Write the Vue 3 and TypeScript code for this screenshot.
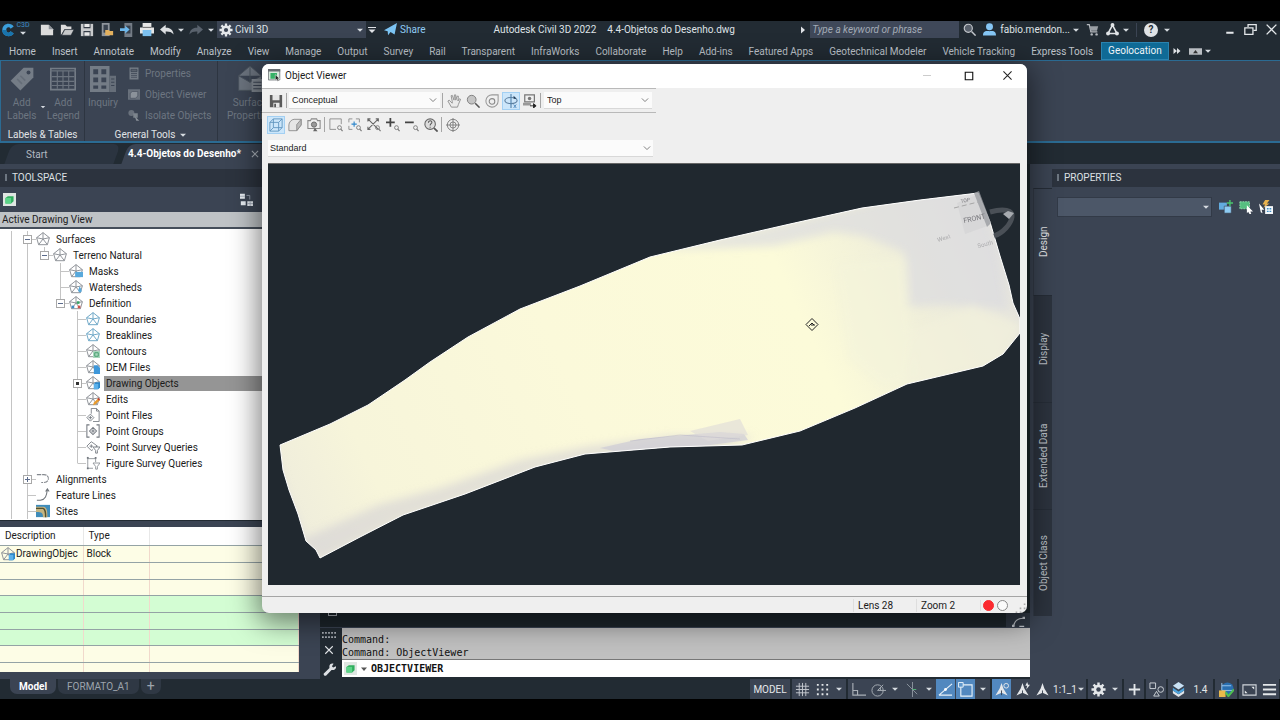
<script setup lang="ts">
import { ref } from 'vue'

const tri = '<path d="M2 5.500h12L8 11.500z" fill="#d5dae0"/>'
const gear = '<g stroke="#e4e7ea" stroke-width="2.600"><path d="M8 .5v15M.5 8h15M2.700 2.700l10.600 10.600M13.300 2.700L2.700 13.300"/></g><circle cx="8" cy="8" r="5.200" fill="#e4e7ea"/><circle cx="8" cy="8" r="2.400" fill="#3b4453"/>'
const house = '<path d="M.7 6.500L8 .7l7.300 5.800L13 14.500H3zM8 .7V8L.7 6.500M8 8l-5 6.500M8 8l5 6.500M8 8l7.300-1.500" fill="none" stroke="#8d9197" stroke-width="1.100"/>'
const houseBlue = house.replace('#8d9197', '#6ba5c6')
const glass = '<circle cx="12" cy="11" r="2.200" fill="none" stroke="#777"/><path d="M13.500 12.800l2 2.200" stroke="#777" stroke-width="1.300"/>'
const navA = '<path d="M8 1l2 6 4.500 7.500L8 11.500 1.500 14.500 6 7z" fill="#e4e7ea"/><path d="M8 9v5" stroke="#3b4453"/>'

const icons: Record<string, string> = {
  tri, gear, navA,
  logo: '<path d="M14.500 4C11.500-1 1.500 0 1.500 8s10 9 13 4l-3.500-2.500C9.500 12 6 11.500 6 8s3.500-4 5-1.500z" fill="#3b9edb"/><path d="M1.500 8c0 8 10 9 13 4l-3.500-2.500C9.500 12 6 11.500 6 8z" fill="#1974ad"/>',
  newDoc: '<path d="M1 2h9l5 5v7H1z" fill="#dcdcdc"/><path d="M10 2v5h5z" fill="#8d9299"/>',
  open: '<path d="M1 14V2h5l2 2h5v3H5z" fill="#dcdcdc"/><path d="M5.500 7.500H16L12.500 14H2z" fill="#c6c8ca" stroke="#222b33" stroke-width=".6"/>',
  save: '<path d="M1 1h14v14H1z" fill="#c8cacc"/><path d="M4 1h8v5H4zM4 9h8v6H4z" fill="#343c47"/><path d="M5 10.500h6v4H5zM5 1h6v3.500H5z" fill="#e8e8e8"/>',
  saveAs: '<path d="M2 0h9v15H2z" fill="#8f959c"/><path d="M4 2h5v9H4z" fill="#39424e"/><path d="M6 14V8h4l1 1h4v5z" fill="#e3b15e"/>',
  cloudIn: '<path d="M5 0h9v16H5z" fill="#747c86"/><path d="M7 3h5v9H7z" fill="#39424e"/><path d="M0 6h6V3l5 4.500L6 12V9H0z" fill="#6db8ec"/>',
  print: '<path d="M3 0h10v5H3zM0 5h16v7H0z" fill="#e6e6e6"/><path d="M3 8h10v7H3z" fill="#7cc0ef"/><path d="M3 5h10" stroke="#555"/>',
  undo: '<path d="M0 7.500L6.500 2v3.500C11 5 15 7.500 15.500 13 13 10 10 9.500 6.500 9.700V13z" fill="#dcdfe2"/>',
  redo: '<path d="M16 7.500L9.500 2v3.500C5 5 1 7.500.5 13 3 10 6 9.500 9.500 9.700V13z" fill="#59626d"/>',
  barTri: '<path d="M0 3h16" stroke="#dfe2e6" stroke-width="2"/><path d="M1 7h14l-7 7z" fill="#dfe2e6"/>',
  plane: '<path d="M0 9L16 0l-3 14-5-3-3 4-.5-5zM4.500 10L13 3.500 7.500 11z" fill="#7cc4f3"/>',
  right: '<path d="M4 1l8 7-8 7z" fill="#dfe2e6"/>',
  search: '<circle cx="6.500" cy="6.500" r="5" fill="#59616c" stroke="#c4c8cd" stroke-width="1.400"/><path d="M10.500 10.500l5 5" stroke="#c4c8cd" stroke-width="1.800"/>',
  user: '<circle cx="8" cy="4.500" r="4.300" fill="#86c6f4"/><path d="M0 15.500c0-6 4-5.500 8-5.500s8-.5 8 5.500z" fill="#86c6f4"/>',
  cart: '<path d="M1 2h3l2 9h8" fill="none" stroke="#b6babf" stroke-width="1.500"/><path d="M4.500 4H15l-1.500 5.500h-8z" fill="#9a9fa5"/><circle cx="7" cy="14" r="1.500" fill="#b6babf"/><circle cx="13" cy="14" r="1.500" fill="#b6babf"/>',
  delta: '<path d="M8 2.500L13.500 13h-11z" fill="none" stroke="#e1e4e7" stroke-width="1.900"/><circle cx="8" cy="2.500" r="2.400" fill="#e1e4e7"/><circle cx="2.500" cy="13" r="2.400" fill="#e1e4e7"/><circle cx="13.500" cy="13" r="2.400" fill="#e1e4e7"/>',
  min: '<path d="M4 12h9" stroke="#e4e7ea" stroke-width="2.500"/>',
  restore: '<path d="M5 5V2h10v7h-3M1 6h10v8H1z" fill="none" stroke="#e4e7ea" stroke-width="1.600"/>',
  close: '<path d="M2 2l12 12M14 2L2 14" stroke="#e4e7ea" stroke-width="1.700"/>',
  closeDim: '<path d="M3 3l10 10M13 3L3 13" stroke="#a9b0b8" stroke-width="1.700"/>',
  ff: '<path d="M1 2l7 6-7 6zM8 2l7 6-7 6z" fill="#dfe2e6"/>',
  tag: '<path d="M1 9L9 1l6 0v6L7 15z" fill="#747c86"/><circle cx="12" cy="4" r="1.200" fill="#3b4453"/><path d="M5 8l3 3M7 6l3 3" stroke="#656d78"/>',
  grid: '<path d="M.5 1.500h15v13H.5z" fill="none" stroke="#747c86"/><path d="M0 3h16M1 6.500h14M1 9.500h14M1 12h14M4.500 3v11M8 3v11M11.500 3v11" stroke="#6b737e" stroke-width=".7"/>',
  calc: '<path d="M0 0h12v16H0z" fill="#747c86"/><path d="M2 2h3v3H2zM7 2h3v3H7zM2 7h3v3H2zM7 7h3v3H7zM2 12h3v2H2zM7 12h3v2H7z" fill="#3b4453"/><path d="M12 6h4v10h-4z" fill="#666e79"/><path d="M13 8h2M13 10h2M13 12h2" stroke="#3b4453" stroke-width=".7"/>',
  props: '<path d="M2 0h12v16H2z" fill="#747c86"/><path d="M4 2.500h8v3H4zM4 8h8M4 10.500h8M4 13h8" stroke="#3b4453" fill="#59616c"/>',
  cube: '<path d="M0 1h16v14H0z" fill="#69717c"/><path d="M3 6l3-2h7v6l-3 3H3z" fill="#8b929a" stroke="#3b4453" stroke-width=".7"/>',
  isolate: '<circle cx="4.500" cy="4.500" r="4" fill="#69717c"/><path d="M7 5h6v6H7z" fill="#7c848d"/><path d="M9 9l6 6h-4z" fill="#8b929a"/>',
  surfBig: '<path d="M1 6l7-6 7 6v9H1zM1 6l7 4 7-4M8 0v10" fill="#6c747f" stroke="#49525e" stroke-width=".6"/><path d="M9 8h7v8H9z" fill="#808891"/><path d="M10 10h5M10 12h5M10 14h5" stroke="#3b4453" stroke-width=".6"/>',
  green: '<path d="M0 0h16v16H0z" fill="#dfe6e2"/><path d="M3 6l3-2h7v6l-3 3H3z" fill="#2fae5d"/><path d="M3 6h7v7H3z" fill="#5bd488"/>',
  greenWin: '<path d="M.5.5h14v13H.5z" fill="#d8e8dd" stroke="#686d72"/><path d="M0 0h15v3H0z" fill="#686d72"/><path d="M3 5h8v7H3z" fill="#36b167"/><path d="M9 7l5.500 5H12l1.500 2.500-1.500.5-1.500-2.500L9 14z" fill="#222" stroke="#fff" stroke-width=".6"/>',
  orgchart: '<path d="M0 1h6v6H0zM9 10h7v6H9zM1 10h6v5H1z" fill="#e8edf3"/><path d="M8 3h4v5M0 4h6M12.500 10v6M9 13h7" stroke="#9aa4b1" fill="none"/>',
  house,
  houseBlue,
  masks: house + '<path d="M7 9h9v6H7z" fill="#58a9dc"/>',
  water: house + '<path d="M12 7c6 8-1 9-1.500 5z" fill="#58a9dc"/>',
  def: house + '<path d="M9 6h3v3H9z" fill="#38a567"/><path d="M3 11h3v3H3z" fill="#3d8dc4"/><path d="M10 11h3v3h-3z" fill="#cf5148"/>',
  contours: house + '<path d="M8 8h8v8H8z" fill="#a9d6bd"/><path d="M10 10h4v4h-4z" fill="none" stroke="#3b9868"/>',
  dem: house + '<path d="M9 6h4l3 3v7H9z" fill="#3e97da"/>',
  objs: house + '<path d="M9 9l2-2h5v6l-2 2H9z" fill="#2b86c9"/><path d="M9 9h5v6H9z" fill="#5bb0ea"/>',
  edits: house + '<path d="M8 15l1-3 5-5 2 2-5 5z" fill="#e89b2e"/><path d="M13 8l1-1.500 2 2L15 10z" fill="#c53e32"/>',
  pfile: '<path d="M6 .5h6l3 3v12H8M6 .5v6M12 .5v3h3M1 11l4-4 4 4-4 4zM3 11h4M5 9v4" fill="none" stroke="#747980"/>',
  pgroup: '<path d="M4 1H1v14h3M12 1h3v14h-3M4 8l4-4 4 4-4 4zM6 8h4M8 6v4" fill="none" stroke="#747980" stroke-width="1.200"/>',
  pquery: '<path d="M1 7l5-5 3 2 4 3-2 1M1 7l5 5 2-1M6 5v4M4 7h4M8 8h8l-3 4v3h-2v-3z" fill="none" stroke="#747980"/>',
  fquery: '<path d="M2 1v13h6M2 3h9M11 2v5M8 8h8l-3 4v3h-2v-3z" fill="none" stroke="#8b9096"/><path d="M1 1h2v2H1zM10 1h2v2h-2zM1 13h2v2H1z" fill="#747980"/>',
  align: '<path d="M1 3h8c7 0 7 9 0 9H6" fill="none" stroke="#85898f" stroke-width="1.200" stroke-dasharray="5 1"/>',
  feature: '<path d="M1 14h4c6-1 7-5 8-12M11 4l2-3 2 3" fill="none" stroke="#6d7379" stroke-width="1.200"/>',
  sites: '<path d="M0 1h16v14H0z" fill="#3f8cba"/><path d="M0 3h9c4 1 4 6 4 12H8c0-5-1-6-8-6z" fill="#c5b582"/><path d="M0 5h8c3 1 3 5 3 10" fill="none" stroke="#54502f" stroke-width="1.500"/>',
  addSel: '<path d="M0 3h9v8H0z" fill="#62acdf"/><path d="M6 7h8v8H6z" fill="#8dcbf2" stroke="#3b4453" stroke-width=".7"/><path d="M12.500 0v7M9 3.500h7" stroke="#4ac46d" stroke-width="1.600"/>',
  pick: '<path d="M1 2h11v8H1z" fill="#56bf80" stroke="#93e2b0" stroke-dasharray="2 1"/><path d="M9 6l7 7h-3l1 3h-2l-1.500-2.500L9 15z" fill="#fff"/>',
  quick: '<path d="M7 0h5l-3 4h3L5 9l2-4H4z" fill="#e9b24e"/><path d="M0 4l6 7H3l1 4-2-1z" fill="#fff"/><path d="M7 7h9v9H7z" fill="#f4f7fa"/><path d="M9 10h2M12 10h2M9 13h2M12 13h2" stroke="#3d8dc4" stroke-width="1.500"/>',
  hand: '<path d="M5 15h7l1-3 2.500-6-1.500-.5L12.500 8 13 2.500l-1.500 0L10 7V1L8.500 1 8 7 6 1.500l-1.300.5L6 8.500v2L2.500 7 1 8z" fill="#ebebeb" stroke="#8a8a8a"/>',
  mag: '<circle cx="6.500" cy="6.500" r="5" fill="#c5c5c5" stroke="#777"/><path d="M10.500 10.500l5 5" stroke="#555" stroke-width="1.800"/>',
  orbit: '<path d="M8.500 1H15v7a7 7 0 1 1-6.500-7z" fill="none" stroke="#999" stroke-width="1.200"/><circle cx="8" cy="8.500" r="3.200" fill="none" stroke="#888" stroke-width="1.200"/>',
  corbit: '<ellipse cx="8" cy="7.500" rx="7" ry="3.500" fill="none" stroke="#5d7f9f" stroke-width="1.300"/><path d="M8 0v16" stroke="#5484ad" stroke-width="1.300"/><path d="M11 2l3.500 3.500H11z" fill="#1f3a55"/><path d="M11 12l3 4M14 12l-3 4" stroke="#4c86b8"/>',
  camGo: '<path d="M2 1h11v8H2z" fill="none" stroke="#777" stroke-width="1.400"/><circle cx="7.500" cy="5" r="2" fill="#777"/><path d="M0 10h9v3H0z" fill="#999"/><path d="M8 13.500h6M12 11l3 2.500-3 2.500z" fill="#222" stroke="#222"/>',
  wire: '<path d="M1 5l4-4h10v10l-4 4H1zM1 5h10v10M11 5l4-4M5 1v10h10M5 11l-4 4" fill="none" stroke="#5e94be"/>',
  solid: '<path d="M1 8c0-3 3-6.500 6-6.500h8V8l-5 6.500H1z" fill="#e6e6e6" stroke="#8a8a8a"/><path d="M10 7.500l5-6V8l-5 6.500z" fill="#bdbdbd" stroke="#8a8a8a"/>',
  cam: '<path d="M1 3h3l1-2h6l1 2h3v9H1z" fill="none" stroke="#8a8a8a" stroke-width="1.200"/><circle cx="8" cy="7.500" r="3" fill="#999" stroke="#666"/><path d="M9 11l3 4H7z" fill="#666"/>',
  zwin: '<path d="M8 13H1V1h13v6" fill="none" stroke="#888"/>' + glass,
  zext: '<path d="M1 5V1h4M9 1h4v4M1 9v4h4" fill="none" stroke="#888"/><path d="M7 4v6M4 7h6" stroke="#2f87cc" stroke-width="1.300"/>' + glass,
  zall: '<path d="M1 1l12 12M13 1L1 13M1 4V1h3M10 1h3v3M1 10v3h3" fill="none" stroke="#666" stroke-width="1.200"/>' + glass,
  zin: '<path d="M5 0v10M0 5h10" stroke="#444" stroke-width="2"/>' + glass,
  zout: '<path d="M0 5h10" stroke="#444" stroke-width="2"/>' + glass,
  zq: '<circle cx="7" cy="7" r="6" fill="#ddd" stroke="#666" stroke-width="1.200"/><path d="M5 5.500c0-3 4-3 4-.5 0 1.500-2 1.500-2 3.500M7 10v1.200" stroke="#555" fill="none" stroke-width="1.200"/><path d="M11.500 11.500l4 4" stroke="#555" stroke-width="2"/>',
  target: '<circle cx="8" cy="8" r="6.500" fill="none" stroke="#777"/><circle cx="8" cy="8" r="3.500" fill="none" stroke="#777"/><path d="M8 0v16M0 8h16" stroke="#777"/>',
  floppy: '<path d="M1 1h14v14H1z" fill="#5a5a5a"/><path d="M4 1h8v6H4zM5 10h7v5H5z" fill="#e6e6e6"/><path d="M6 11h2v4H6z" fill="#555"/>',
  max: '<path d="M2 2h12v12H2z" fill="none" stroke="#111" stroke-width="1.800"/>',
  xdark: '<path d="M3 3l10 10M13 3L3 13" stroke="#222" stroke-width="1.300"/>',
  chev: '<path d="M3 5.500l5 5 5-5" fill="none" stroke="#777" stroke-width="1.500"/>',
  wrench: '<path d="M1 13l7-7c-1-4 2-6 5-5l-2 3 1.500 1.500L16 4c.5 3-2 5.500-5.500 4.500L4 15.500c-1.500 1-4-1-3-2.500z" fill="#dde0e4"/>',
  dots: '<path d="M0 2h16M0 7h16" stroke="#aeb4bb" stroke-width="2" stroke-dasharray="2 1.500"/>',
  sgrid: '<path d="M4.500 1v14M11.500 1v14M1 4.500h14M1 11.500h14M8 1v14M1 8h14" stroke="#c4c9cf"/>',
  sdots: '<path d="M2 3h13M2 8h13M2 13h13" stroke="#e4e7ea" stroke-width="2" stroke-dasharray="2 3"/>',
  ortho: '<path d="M2 1v13h14M2 9h5v5" fill="none" stroke="#aab0b8" stroke-width="1.200"/>',
  polar: '<circle cx="7" cy="9" r="6" fill="none" stroke="#aab0b8"/><path d="M7 9h9M7 9l6-6M10 9V6" stroke="#aab0b8" fill="none"/>',
  iso: '<path d="M2 2l11 11M8 0v16" stroke="#8d959f"/><path d="M8 8h4" stroke="#55b87b"/>',
  otrack: '<path d="M1 14L15 2M1 14h14" stroke="#e9f2fa" fill="none" stroke-width="1.200"/><circle cx="8" cy="8" r="1.500" fill="#fff"/>',
  osnap: '<path d="M3 3h12v12H3z" fill="none" stroke="#e9f2fa" stroke-width="1.200"/><path d="M.5.5h5v5h-5z" fill="#5f97cc" stroke="#e9f2fa"/>',
  annoVis: navA + '<circle cx="13" cy="4" r="2.500" fill="none" stroke="#e4e7ea"/>',
  annoAdd: navA + '<path d="M13 0l-2 4h2l-1 4 4-5h-2z" fill="#e4e7ea"/>',
  plus: '<path d="M8 2v12M2 8h12" stroke="#e4e7ea" stroke-width="2"/>',
  shapes: '<path d="M1 1h6v6H1zM5 15l3-5 3 5z" fill="none" stroke="#cfd4da"/><circle cx="12.500" cy="8" r="3" fill="none" stroke="#cfd4da"/>',
  layers: '<path d="M2 9l6 4 6-4v3l-6 4-6-4z" fill="#dfe4ea"/><path d="M2 6l6 4 6-4v3l-6 4-6-4z" fill="#4da3dd"/><path d="M2 4l6-4 6 4-6 4z" fill="#c9e2f5"/>',
  check: '<circle cx="9" cy="7" r="6.500" fill="#2a6fb0"/><path d="M3 1v8h12M3 4h10" stroke="#9cc8ef" fill="none"/><path d="M0 9h7v7H0z" fill="#e9b94c"/><path d="M7 11l3 4 6-7" fill="none" stroke="#4fc04f" stroke-width="2.200"/>',
  full: '<path d="M1 3h14v11H1z" fill="none" stroke="#cfd4da" stroke-width="1.200"/><path d="M13 5h-3l3 3zM3 12h3l-3-3z" fill="#e4e7ea"/>',
  menu: '<path d="M1 3h14M1 8h14M1 13h14" stroke="#e4e7ea" stroke-width="2"/>',
  ribMin: '<path d="M0 4h16v8H0z" fill="#b9bdc2"/><path d="M5 10h6L8 6z" fill="#333"/>',
  arc: '<path d="M2 14C3 7 8 4 14 4M9 14h6" stroke="#c4c9cf" fill="none" stroke-width="1.500"/><path d="M13 2h3v3h-3zM0 12h3v3H0z" fill="#c4c9cf"/>',
}

const menus = ['Home', 'Insert', 'Annotate', 'Modify', 'Analyze', 'View', 'Manage', 'Output', 'Survey', 'Rail', 'Transparent', 'InfraWorks', 'Collaborate', 'Help', 'Add-ins', 'Featured Apps', 'Geotechnical Modeler', 'Vehicle Tracking', 'Express Tools', 'Geolocation']
const activeMenu = ref('Geolocation')

interface Node { d: number; label: string; icon: string; exp?: '-' | '+' | '*'; last?: boolean }
const nodes: Node[] = [
  { d: 1, label: 'Surfaces', icon: 'house', exp: '-' },
  { d: 2, label: 'Terreno Natural', icon: 'house', exp: '-', last: true },
  { d: 3, label: 'Masks', icon: 'masks' },
  { d: 3, label: 'Watersheds', icon: 'water' },
  { d: 3, label: 'Definition', icon: 'def', exp: '-', last: true },
  { d: 4, label: 'Boundaries', icon: 'houseBlue' },
  { d: 4, label: 'Breaklines', icon: 'houseBlue' },
  { d: 4, label: 'Contours', icon: 'contours' },
  { d: 4, label: 'DEM Files', icon: 'dem' },
  { d: 4, label: 'Drawing Objects', icon: 'objs', exp: '*' },
  { d: 4, label: 'Edits', icon: 'edits' },
  { d: 4, label: 'Point Files', icon: 'pfile' },
  { d: 4, label: 'Point Groups', icon: 'pgroup' },
  { d: 4, label: 'Point Survey Queries', icon: 'pquery' },
  { d: 4, label: 'Figure Survey Queries', icon: 'fquery', last: true },
  { d: 1, label: 'Alignments', icon: 'align', exp: '+' },
  { d: 1, label: 'Feature Lines', icon: 'feature' },
  { d: 1, label: 'Sites', icon: 'sites' },
]
const selected = ref('Drawing Objects')
const lineX = [11, 27, 44, 60, 77]
function guide(n: Node): string {
  const x = lineX[n.d] + 0.5
  let p = 'M11.500 0V16'
  if (n.d > 1) p += 'M27.500 0V16'
  p += `M${x} 0V${n.last ? 8 : 16}M${x} 8.500h9`
  return p
}

const style = ref('Conceptual')
const view = ref('Top')
const ucs = ref('Standard')
const keyword = ref('')
const command = ref('OBJECTVIEWER')
const propTabs = ['Design', 'Display', 'Extended Data', 'Object Class']
const propTab = ref('Design')
const navTools = ['hand', 'mag', 'orbit', 'corbit', 'camGo']
const visTools = ['wire', 'solid', 'cam']
const zoomTools = ['zwin', 'zext', 'zall', 'zin', 'zout', 'zq']

const outline = 'M280 445L330 424 368 405 405 380 430 362 468 337 520 309 580 286 650 257 720 240 790 224 862 208 920 200 978 193 990 222 1000 256 1009 285 1013 303 1020 319V333L1003 354 983 366 907 384 855 408 800 431 742 445 670 447 585 454 535 467 465 494 403 515 360 537 320 558 316 550 306 541 298 514 289 490 283 470z'
</script>

<template>
  <div class="screen">
    <div class="app">
      <header class="titlebar">
        <div class="quick">
          <button class="ib" aria-label="Application"><svg class="i14" viewBox="0 0 16 16" v-html="icons.logo" /></button>
          <span class="c3d">C3D<svg viewBox="0 0 16 16" v-html="icons.tri" /></span>
          <button v-for="k in ['newDoc', 'open', 'save', 'saveAs', 'cloudIn', 'print', 'undo']" :key="k" class="ib qb" :aria-label="k"><svg class="i14" viewBox="0 0 16 16" v-html="icons[k]" /></button>
          <svg class="i8" viewBox="0 0 16 16" v-html="icons.tri" />
          <button class="ib redo" aria-label="Redo"><svg class="i14" viewBox="0 0 16 16" v-html="icons.redo" /></button>
          <svg class="i8" viewBox="0 0 16 16" v-html="icons.tri" />
          <div class="workspace">
            <svg class="i14" viewBox="0 0 16 16" v-html="icons.gear" />
            <select aria-label="Workspace"><option>Civil 3D</option></select>
            <svg class="i8" viewBox="0 0 16 16" v-html="icons.tri" />
          </div>
          <svg class="i8 gapr" viewBox="0 0 16 16" v-html="icons.barTri" />
          <button class="share"><svg class="i12" viewBox="0 0 16 16" v-html="icons.plane" />Share</button>
        </div>
        <h1 class="doc"><span>Autodesk Civil 3D 2022</span><span>4.4-Objetos do Desenho.dwg</span></h1>
        <div class="account">
          <svg class="i8" viewBox="0 0 16 16" v-html="icons.right" />
          <input v-model="keyword" class="keyword" placeholder="Type a keyword or phrase" aria-label="Search">
          <button class="ib srch" aria-label="Find"><svg class="i12" viewBox="0 0 16 16" v-html="icons.search" /></button>
          <button class="userb"><svg class="i12" viewBox="0 0 16 16" v-html="icons.user" />fabio.mendon...<svg class="i8" viewBox="0 0 16 16" v-html="icons.tri" /></button>
          <button class="ib cart" aria-label="Store"><svg class="i12" viewBox="0 0 16 16" v-html="icons.cart" /></button>
          <button class="ib apps" aria-label="Apps"><svg class="i12" viewBox="0 0 16 16" v-html="icons.delta" /></button>
          <svg class="i8" viewBox="0 0 16 16" v-html="icons.tri" />
          <i class="bar" />
          <button class="help" aria-label="Help">?</button>
          <svg class="i8" viewBox="0 0 16 16" v-html="icons.tri" />
        </div>
        <div class="winb">
          <button v-for="k in ['min', 'restore', 'close']" :key="k" class="ib" :aria-label="k"><svg class="i12" viewBox="0 0 16 16" v-html="icons[k]" /></button>
        </div>
      </header>

      <nav class="menus">
        <button v-for="m in menus" :key="m" :class="{ on: m === activeMenu }" @click="activeMenu = m">{{ m }}</button>
        <svg class="i8 more" viewBox="0 0 16 16" v-html="icons.ff" />
        <svg class="i12" viewBox="0 0 16 16" v-html="icons.ribMin" />
        <svg class="i8" viewBox="0 0 16 16" v-html="icons.tri" />
      </nav>

      <section class="ribbon">
        <div class="panel p1">
          <div class="tools">
            <button class="big"><svg viewBox="0 0 16 16" v-html="icons.tag" /><span>Add<br>Labels</span><svg class="drop" viewBox="0 0 16 16" v-html="icons.tri" /></button>
            <button class="big"><svg viewBox="0 0 16 16" v-html="icons.grid" /><span>Add<br>Legend</span></button>
          </div>
          <div class="ptitle">Labels &amp; Tables</div>
        </div>
        <div class="panel p2">
          <div class="tools">
            <button class="big inq"><svg viewBox="0 0 16 16" v-html="icons.calc" /><span>Inquiry</span></button>
            <div class="small">
              <button><svg viewBox="0 0 16 16" v-html="icons.props" />Properties</button>
              <button><svg viewBox="0 0 16 16" v-html="icons.cube" />Object Viewer</button>
              <button><svg viewBox="0 0 16 16" v-html="icons.isolate" />Isolate Objects</button>
            </div>
          </div>
          <div class="ptitle">General Tools <svg class="i8" viewBox="0 0 16 16" v-html="icons.tri" /></div>
        </div>
        <div class="panel p3">
          <div class="tools">
            <button class="big"><svg viewBox="0 0 16 16" v-html="icons.surfBig" /><span>Surface<br>Properties</span></button>
          </div>
        </div>
      </section>

      <div class="files">
        <button class="ftab start">Start</button>
        <button class="ftab act">4.4-Objetos do Desenho*<svg class="i10" viewBox="0 0 16 16" v-html="icons.closeDim" /></button>
      </div>

      <main class="body">
        <aside class="toolspace">
          <h2 class="phead">TOOLSPACE</h2>
          <div class="tsbar">
            <button class="ib" aria-label="Preview"><svg class="i12" viewBox="0 0 16 16" v-html="icons.green" /></button>
            <button class="ib" aria-label="Panorama"><svg class="i12" viewBox="0 0 16 16" v-html="icons.orgchart" /></button>
          </div>
          <div class="adv">Active Drawing View</div>
          <ul class="tree">
            <li v-for="n in nodes" :key="n.label" @click="selected = n.label">
              <svg class="guide" :class="'g' + n.d" height="16">
                <path :d="guide(n)" fill="none" stroke="#c4c4c4" />
                <g v-if="n.exp">
                  <rect :x="lineX[n.d] - 3.500" y="4.500" width="8" height="8" fill="#fff" stroke="#a8a8a8" />
                  <path v-if="n.exp !== '*'" :d="`M${lineX[n.d] - 2} 8.500h5` + (n.exp === '+' ? `M${lineX[n.d] + .5} 6v5` : '')" stroke="#5b6b8c" />
                  <rect v-else :x="lineX[n.d] - 1" y="7" width="3" height="3" fill="#333" />
                </g>
              </svg>
              <svg class="i14" viewBox="0 0 16 16" v-html="icons[n.icon]" />
              <span class="lab" :class="{ sel: n.label === selected }">{{ n.label }}</span>
            </li>
          </ul>
          <table class="list">
            <thead><tr><th class="c1">Description</th><th class="c2">Type</th><th /></tr></thead>
            <tbody>
              <tr><td><span class="obj"><svg class="i14" viewBox="0 0 16 16" v-html="icons.objs" />DrawingObjec</span></td><td>Block</td><td /></tr>
              <tr v-for="r in 7" :key="r" :class="{ gr: r > 2 && r < 6 }"><td /><td /><td /></tr>
            </tbody>
          </table>
        </aside>

        <section class="canvas">
          <div class="model"><span class="box" /><span class="side"><svg class="i12" viewBox="0 0 16 16" v-html="icons.arc" /></span></div>
          <div class="cmd">
            <div class="grips">
              <svg class="i14" viewBox="0 0 16 16" v-html="icons.dots" />
              <button class="ib" aria-label="Close"><svg class="i10" viewBox="0 0 16 16" v-html="icons.close" /></button>
              <button class="ib wr" aria-label="Customize"><svg class="i12" viewBox="0 0 16 16" v-html="icons.wrench" /></button>
            </div>
            <div class="cmain">
              <div class="hist">Command:<br>Command: ObjectViewer</div>
              <div class="entry">
                <svg class="i12" viewBox="0 0 16 16" v-html="icons.green" />
                <svg class="i8" viewBox="0 0 16 16"><path d="M2 5h12l-6 7z" fill="#555" /></svg>
                <input v-model="command" aria-label="Command line">
              </div>
            </div>
          </div>
        </section>

        <aside class="props">
          <div class="vtabs">
            <button v-for="t in propTabs" :key="t" :class="{ on: t === propTab }" @click="propTab = t">{{ t }}</button>
          </div>
          <div class="pbody">
            <h2 class="phead">PROPERTIES</h2>
            <div class="prow">
              <div class="psel"><select aria-label="Object type"><option /></select><svg class="i8" viewBox="0 0 16 16" v-html="icons.tri" /></div>
              <button v-for="k in ['addSel', 'pick', 'quick']" :key="k" class="ib" :aria-label="k"><svg class="i14" viewBox="0 0 16 16" v-html="icons[k]" /></button>
            </div>
          </div>
        </aside>
      </main>

      <footer class="status">
        <button class="lt on">Model</button>
        <button class="lt">FORMATO_A1</button>
        <button class="lt add">+</button>
        <div class="cells">
          <div class="grp"><button class="txt mdl">MODEL</button></div>
          <div class="grp">
            <button aria-label="Grid"><svg viewBox="0 0 16 16" v-html="icons.sgrid" /></button>
            <button aria-label="Snap"><svg viewBox="0 0 16 16" v-html="icons.sdots" /></button>
            <button class="ar" aria-label="Snap options"><svg viewBox="0 0 16 16" v-html="icons.tri" /></button>
          </div>
          <div class="grp">
            <button aria-label="Ortho"><svg viewBox="0 0 16 16" v-html="icons.ortho" /></button>
            <button aria-label="Polar"><svg viewBox="0 0 16 16" v-html="icons.polar" /></button>
            <button class="ar" aria-label="Polar options"><svg viewBox="0 0 16 16" v-html="icons.tri" /></button>
            <button aria-label="Isometric"><svg viewBox="0 0 16 16" v-html="icons.iso" /></button>
            <button class="ar" aria-label="Isometric options"><svg viewBox="0 0 16 16" v-html="icons.tri" /></button>
            <button class="hl" aria-label="Object tracking"><svg viewBox="0 0 16 16" v-html="icons.otrack" /></button>
            <button class="hl" aria-label="Object snap"><svg viewBox="0 0 16 16" v-html="icons.osnap" /></button>
            <button class="ar" aria-label="Snap modes"><svg viewBox="0 0 16 16" v-html="icons.tri" /></button>
          </div>
          <div class="grp">
            <button class="hl" aria-label="Annotation visibility"><svg viewBox="0 0 16 16" v-html="icons.annoVis" /></button>
            <button aria-label="Auto scale"><svg viewBox="0 0 16 16" v-html="icons.annoAdd" /></button>
            <button aria-label="Annotation scale"><svg viewBox="0 0 16 16" v-html="icons.navA" /></button>
            <button class="txt sc">1:1_1<svg viewBox="0 0 16 16" v-html="icons.tri" /></button>
          </div>
          <div class="grp">
            <button aria-label="Settings"><svg viewBox="0 0 16 16" v-html="icons.gear" /></button>
            <button class="ar" aria-label="Workspaces"><svg viewBox="0 0 16 16" v-html="icons.tri" /></button>
          </div>
          <div class="grp"><button aria-label="Monitor"><svg viewBox="0 0 16 16" v-html="icons.plus" /></button></div>
          <div class="grp"><button aria-label="Isolate"><svg viewBox="0 0 16 16" v-html="icons.shapes" /></button></div>
          <div class="grp">
            <button aria-label="Elevation"><svg viewBox="0 0 16 16" v-html="icons.layers" /></button>
            <button class="txt el">1.4</button>
          </div>
          <div class="grp"><button class="wide" aria-label="Coordinates"><svg viewBox="0 0 16 16" v-html="icons.check" /></button></div>
          <div class="grp">
            <button aria-label="Clean screen"><svg viewBox="0 0 16 16" v-html="icons.full" /></button>
            <button aria-label="Customization"><svg viewBox="0 0 16 16" v-html="icons.menu" /></button>
          </div>
        </div>
      </footer>
    </div>

    <section class="dialog" role="dialog" aria-label="Object Viewer">
      <header class="dtitle">
        <svg class="i12" viewBox="0 0 16 16" v-html="icons.greenWin" />
        <h2>Object Viewer</h2>
        <button class="dmin" aria-label="Minimize" disabled />
        <button class="ib" aria-label="Maximize"><svg class="i10" viewBox="0 0 16 16" v-html="icons.max" /></button>
        <button class="ib" aria-label="Close"><svg class="i12" viewBox="0 0 16 16" v-html="icons.xdark" /></button>
      </header>
      <div class="drow">
        <button class="tb" aria-label="Save"><svg viewBox="0 0 16 16" v-html="icons.floppy" /></button>
        <i class="sep" />
        <div class="dsel s1"><select v-model="style" aria-label="Visual style"><option>Conceptual</option></select><svg class="i10" viewBox="0 0 16 16" v-html="icons.chev" /></div>
        <i class="sep" />
        <button v-for="k in navTools" :key="k" class="tb" :class="{ on: k === 'corbit' }" :aria-label="k"><svg viewBox="0 0 16 16" v-html="icons[k]" /></button>
        <i class="sep" />
        <div class="dsel s2"><select v-model="view" aria-label="View"><option>Top</option></select><svg class="i10" viewBox="0 0 16 16" v-html="icons.chev" /></div>
      </div>
      <div class="drow">
        <button v-for="k in visTools" :key="k" class="tb" :class="{ on: k === 'wire' }" :aria-label="k"><svg viewBox="0 0 16 16" v-html="icons[k]" /></button>
        <i class="sep" />
        <button v-for="k in zoomTools" :key="k" class="tb" :aria-label="k"><svg viewBox="0 0 16 16" v-html="icons[k]" /></button>
        <i class="sep" />
        <button class="tb" aria-label="Target"><svg viewBox="0 0 16 16" v-html="icons.target" /></button>
      </div>
      <div class="dsel s3"><select v-model="ucs" aria-label="UCS"><option>Standard</option></select><svg class="i10" viewBox="0 0 16 16" v-html="icons.chev" /></div>
      <div class="view">
        <svg viewBox="268 164 752 421" preserveAspectRatio="xMidYMid slice">
          <defs>
            <linearGradient id="ground" gradientUnits="userSpaceOnUse" x1="300" y1="540" x2="1010" y2="210">
              <stop offset="0" stop-color="#efeddc" /><stop offset=".12" stop-color="#f7f5da" /><stop offset=".4" stop-color="#fbf9da" /><stop offset=".7" stop-color="#fcfbd9" /><stop offset=".84" stop-color="#f0efda" /><stop offset="1" stop-color="#e2e1df" />
            </linearGradient>
            <clipPath id="edge"><path :d="outline" /></clipPath>
            <filter id="soft"><feGaussianBlur stdDeviation="4" /></filter>
          </defs>
          <g clip-path="url(#edge)">
            <path d="M268 164h752v421H268z" fill="url(#ground)" />
            <g filter="url(#soft)">
              <path d="M660 250L978 180l22 80 8 50-60-5-40 2-4-55-40-16-30-4-60 14z" fill="#dcdbdf" opacity=".7" />
              <path d="M835 262l72-4 6 120-30 10-35-30z" fill="#f4f3da" opacity=".6" />
              <path d="M912 330l60-25 50 20-20 40-95 22z" fill="#f2f1dc" opacity=".7" />
              <path d="M320 560L403 519 465 498 535 471 600 457 720 449 755 436 670 436 590 446 520 460 440 488 380 504 300 540z" fill="#d3d0d6" opacity=".6" />
              <path d="M274 445l12 45 20 50h-25z" fill="#deddde" opacity=".7" />
            </g>
            <path d="M600 448l40-9 80-7 24 2 4 6-60 8-70 4z" fill="#cbc9d6" opacity=".65" />
            <path d="M690 431l50-12 8 16-40 6z" fill="#dddbd8" opacity=".6" />
            <path d="M630 441l50-6 60 4" fill="none" stroke="#b9b7c8" opacity=".5" />
          </g>
          <path :d="outline" fill="none" stroke="#fff" />
          <path d="M990 212c14-4 23-2 22 5s-9 16-18 19" fill="none" stroke="#4a5057" stroke-width="5" />
          <path d="M1003 214l5-3 6 2-5 6z" fill="#a7abb0" />
          <path d="M957 203l22-9 11 31-25 9z" fill="#cfcfd2" opacity=".5" /><path d="M974 193l5-2 12 32-4 4z" fill="#9b9ea3" opacity=".8" />
          <path d="M954 208l24-6" stroke="#a5a5a5" stroke-dasharray="5 3" />
          <g font-family="Roboto, sans-serif" font-size="7" fill="#77777c">
            <text transform="translate(964 223) rotate(-12)">FRONT</text>
            <text transform="translate(961 203) rotate(-12)" font-size="5">TOP</text>
            <text transform="translate(938 242) rotate(-18)" font-size="6" opacity=".5">West</text>
            <text transform="translate(978 248) rotate(-14)" font-size="6" opacity=".5">South</text>
          </g>
          <path d="M812 318.500l6 6-6 6-6-6z" fill="none" stroke="#222" /><path d="M809 326l3-3 2 2M811 325h4" fill="none" stroke="#222" />
        </svg>
      </div>
      <footer class="dstat">
        <span class="lens">Lens 28</span><span class="zoomv">Zoom 2</span>
        <span class="lamps"><i class="lamp red" /><i class="lamp" /></span>
        <svg class="i12 grip" viewBox="0 0 16 16"><path d="M12 3h2v2h-2zM12 8h2v2h-2zM7 8h2v2H7zM12 13h2v2h-2zM7 13h2v2H7zM2 13h2v2H2z" fill="#aaa" /></svg>
      </footer>
    </section>
  </div>
</template>

<style>
body { background: #000; }
</style>

<style scoped>
* { box-sizing: border-box; }
.screen { position: relative; min-height: 100vh; padding: 21px 0; display: flex; flex-direction: column; background: #000; overflow: hidden; font: 10px/13px Roboto, "Open Sans", sans-serif; color: #bdc2c9; }
.app { flex: 1; display: flex; flex-direction: column; background: #222b33; }
button, select, input { font: inherit; color: inherit; border: 0; background: none; padding: 0; margin: 0; border-radius: 0; appearance: none; outline: 0; }
button { cursor: pointer; white-space: nowrap; }
h1, h2 { margin: 0; font: inherit; }
svg { display: block; flex: none; }
.ib { display: flex; align-items: center; justify-content: center; }
.i8 { width: 8px; height: 8px; }
.i10 { width: 10px; height: 10px; }
.i12 { width: 13px; height: 13px; }
.i14 { width: 14px; height: 14px; }

.titlebar { display: flex; height: 17px; align-items: center; }
.quick { display: flex; align-items: center; padding-left: 1px; }
.c3d { width: 16px; margin-right: 6px; display: flex; flex-direction: column; align-items: center; font-size: 7px; line-height: 7px; color: #3d8dc4; }
.c3d svg { width: 8px; height: 8px; }
.qb { width: 20px; }
.redo { width: 22px; }
.workspace { display: flex; align-items: center; width: 149px; height: 17px; padding: 0 2px; margin: 0 2px; background: #3b4453; }
.workspace select { flex: 1; padding-left: 2px; color: #dfe2e6; }
.gapr { margin-right: 8px; }
.share { display: flex; align-items: center; gap: 3px; color: #8ecaf2; }
.doc { flex: 1; display: flex; gap: 11px; padding-left: 68px; color: #dfe2e6; white-space: nowrap; }
.account { display: flex; align-items: center; }
.keyword { width: 149px; height: 17px; margin-left: 3px; padding: 0 2px; background: #3f4859; font-style: italic; }
.keyword::placeholder { color: #a3abb6; opacity: 1; }
.srch { width: 20px; }
.userb { display: flex; align-items: center; gap: 4px; margin-left: 4px; color: #dfe2e6; }
.userb .i8 { margin-left: -2px; }
.cart { margin: 0 7px 0 6px; }
.apps { margin-right: 3px; }
.bar { width: 1px; height: 14px; margin: 0 7px 0 6px; background: #3b4453; }
.help { width: 14px; height: 14px; margin-right: 5px; border-radius: 50%; background: #dfe2e6; color: #222b33; font-weight: 700; line-height: 14px; }
.winb { display: flex; gap: 8px; padding: 0 2px 0 52px; }

.menus { display: flex; align-items: flex-end; height: 22px; }
.menus button { height: 18px; padding: 0 8px; line-height: 19px; }
.menus button:first-child { padding-left: 9px; }
.menus button.on { background: #0f6a96; color: #eef3f7; padding: 0 6px; border: 1px solid #2a83b0; line-height: 16px; }
.menus svg { align-self: center; margin-top: 4px; margin-left: 2px; }
.menus .more { margin-right: 6px; margin-left: 4px; }

.ribbon { display: flex; height: 83px; background: #3b4453; border: solid #2b6b93; border-width: 1px 0 2px 1px; }
.panel { border-right: 1px solid #2d3541; display: flex; flex-direction: column; color: #6d7681; }
.p1 { width: 84px; }
.p2 { width: 133px; }
.p3 { border: 0; padding-left: 10px; }
.tools { flex: 1; display: flex; padding-top: 5px; }
.big { position: relative; display: flex; flex-direction: column; align-items: center; gap: 4px; width: 42px; line-height: 13px; justify-content: flex-start; }
.big svg { width: 26px; height: 26px; }
.big .drop { position: absolute; right: -3px; top: 38px; width: 6px; height: 6px; }
.inq { width: 36px; }
.small { display: flex; flex-direction: column; padding-left: 7px; margin-top: -3px; }
.small button { display: flex; align-items: center; gap: 5px; height: 21px; }
.small svg { width: 12px; height: 13px; }
.ptitle { display: flex; justify-content: center; align-items: center; gap: 4px; height: 13px; color: #e0e3e6; }
.p3 .big { width: 44px; }

.files { display: flex; height: 21px; padding-left: 4px; }
.ftab { position: relative; z-index: 0; height: 21px; line-height: 23px; text-align: left; }
.ftab::before { content: ""; position: absolute; z-index: -1; inset: 1px 4px 0; background: #2b3440; border-radius: 7px 7px 0 0; transform: skewX(-20deg); }
.start { width: 117px; padding-left: 22px; color: #b4b9c0; }
.act { width: 150px; padding-left: 7px; display: flex; align-items: center; gap: 9px; color: #fff; font-weight: 700; }
.act::before { background: #3b4453; }

.body { flex: 1; display: flex; min-height: 515px; background: #3b4453; }
.phead { height: 18px; line-height: 17px; padding-left: 12px; background: #2c333e; color: #dde0e4; background-image: linear-gradient(#6d7681, #6d7681); background-size: 2px 7px; background-position: 5px 5px; background-repeat: no-repeat; }
.toolspace { width: 299px; display: flex; flex-direction: column; padding: 5px 0 7px; }
.tsbar { display: flex; justify-content: space-between; height: 25px; padding: 0 46px 0 3px; }
.adv { height: 17px; line-height: 15px; padding-left: 2px; background: #bfc3c6; color: #1c1c1c; border-bottom: 2px solid #454e5a; }
.tree { flex: 1; margin: 0; padding: 2px 0 0; list-style: none; background: #fff; color: #1b1b1b; border-bottom: 1px solid #222b33; }
.tree li { display: flex; align-items: center; height: 16px; cursor: default; }
.g1 { width: 36px; }
.g2 { width: 53px; }
.g3 { width: 69px; }
.g4 { width: 86px; }
.guide { height: 16px; }
.lab { margin-left: 4px; padding: 0 2px; line-height: 15px; white-space: nowrap; }
.sel { flex: 1; background: #959595; }
.list { width: 299px; margin-top: 6px; table-layout: fixed; border-collapse: collapse; background: #fdfde6; color: #1b1b1b; }
.list th, .list td { height: 17px; padding: 0 0 0 3px; font-weight: 400; text-align: left; line-height: 15px; border-right: 1px solid #f1d9cc; border-bottom: 1px solid #94a3a5; overflow: hidden; white-space: nowrap; }
.list th { height: 18px; padding-left: 5px; background: #fff; border-right-color: #e8e8e8; }
.list tr:nth-child(3n) td { height: 16px; }
.list tr:last-child td { height: 10px; border-bottom: 0; }
.list td:first-child { padding-left: 1px; }
.c1 { width: 83px; }
.c2 { width: 66px; }
.gr { background: #d3fdd3; }
.obj { display: flex; align-items: center; gap: 1px; height: 16px; overflow: hidden; width: 77px; }

.canvas { flex: 1; display: flex; flex-direction: column; margin-left: 21px; padding-bottom: 2px; background: #222b33; }
.model { flex: 1; display: flex; justify-content: space-between; align-items: flex-end; background: #1d262c; }
.box { width: 9px; height: 9px; margin: 0 0 11px 8px; border: 1px solid #b4b9c0; }
.side { width: 24px; height: 14px; background: #2f3844; padding: 2px 6px; }
.cmd { display: flex; height: 50px; border-top: 1px solid #3b4453; }
.grips { width: 22px; display: flex; flex-direction: column; align-items: center; padding: 3px 4px 0 0; }
.grips .wr { margin-top: 8px; }
.cmain { flex: 1; display: flex; flex-direction: column; color: #111; font: 10px/13px "DejaVu Sans Mono", monospace; }
.hist { flex: 1; padding: 5px 0 0; background: #c0c0c0; border-bottom: 1px solid #777; }
.entry { display: flex; align-items: center; gap: 3px; height: 17px; padding-left: 2px; background: #fff; }
.entry input { flex: 1; font-weight: 700; }

.props { width: 250px; display: flex; }
.vtabs { display: flex; flex-direction: column; width: 22px; padding: 24px 0 0 3px; }
.vtabs button { height: 107px; writing-mode: vertical-rl; transform: rotate(180deg); text-align: center; line-height: 15px; padding-left: 0; background: #2c333e; border-bottom: 1px solid #262d37; border-right: 1px solid #323a47; }
.vtabs button.on { background: none; color: #e4e7ea; }
.pbody { flex: 1; padding-top: 5px; }
.prow { display: flex; align-items: center; gap: 6px; padding: 10px 5px; }
.psel { flex: 1; display: flex; align-items: center; max-width: 155px; height: 20px; margin-right: 1px; padding-right: 1px; background: #4c5768; border: 1px solid #323a47; }
.psel select { flex: 1; min-width: 0; }

.status { display: flex; height: 20px; background: #222b33; padding: 0 1px 0 10px; }
.lt { height: 15px; padding: 0 9px; margin-right: 2px; line-height: 13px; background: #2f3844; border-radius: 0 0 7px 7px; color: #9da4ad; }
.lt.on { background: #3b4453; color: #fff; font-weight: 700; }
.lt.add { padding: 0 6px; font-size: 14px; }
.cells { margin-left: auto; display: flex; gap: 2px; }
.grp { display: flex; background: #3b4453; }
.grp button { display: flex; align-items: center; justify-content: center; width: 20px; height: 20px; }
.grp svg { width: 15px; height: 15px; }
.grp .ar { width: 14px; }
.grp .ar svg, .sc svg { width: 8px; height: 8px; }
.grp .txt { color: #e4e7ea; }
.grp .mdl { width: 40px; }
.grp .sc { width: 34px; }
.grp .el { width: 25px; }
.grp .wide { width: 22px; }
.grp .hl { background: #5288bf; border: solid #3b4453; border-width: 0 1px 0 0; }

.dialog { position: absolute; left: 262px; right: 253px; top: 64px; bottom: 107px; display: flex; flex-direction: column; background: #efefef; color: #1b1b1b; border-radius: 7px; overflow: hidden; box-shadow: 0 6px 28px 4px rgba(0, 0, 0, .5); }
.dtitle { display: flex; align-items: center; height: 24px; padding: 0 13px 1px 6px; background: #fff; }
.dtitle h2 { flex: 1; padding-left: 4px; }
.dtitle .ib { width: 13px; margin-left: 26px; }
.dmin { width: 8px; height: 1px; margin-right: 5px; background: #ccc; }
.drow { display: flex; align-items: center; width: 394px; height: 24px; padding-left: 5px; border-top: 1px solid #b9b9b9; }
.tb { display: flex; align-items: center; justify-content: center; width: 18px; height: 18px; margin-right: 1px; }
.tb svg { width: 14px; height: 14px; }
.tb.on { background: #cce6fa; outline: 1px solid #a3d0f3; outline-offset: -1px; }
.sep { width: 1px; height: 15px; margin: 0 2px 0 0; background: #a5a5a5; }
.dsel { display: flex; align-items: center; height: 17px; padding-right: 2px; background: #fbfbfb; border-bottom: 1px solid #d8d8d8; font: 9px/13px "Liberation Sans", Arial, sans-serif; }
.dsel select { flex: 1; padding-left: 3px; }
.s1 { width: 151px; margin-right: 2px; }
.s2 { width: 108px; margin-left: 1px; }
.s3 { width: 385px; margin: 4px 0 6px 6px; padding-right: 1px; }
.s3 select { padding-left: 2px; }
.view { flex: 1; min-height: 0; margin: 0 7px 11px 6px; border-top: 1px solid #666; background: #20282f; }
.view svg { width: 100%; height: 100%; }
.dstat { display: flex; align-items: center; height: 17px; border-top: 1px solid #a5a5a5; justify-content: flex-end; }
.lens { width: 63px; padding-left: 4px; border-left: 1px solid #dedede; }
.zoomv { width: 64px; padding-left: 4px; border-left: 1px solid #dedede; }
.lamps { display: flex; gap: 3px; padding-left: 2px; border-left: 1px solid #dedede; }
.lamp { width: 11px; height: 11px; border: 1px solid #888; border-radius: 50%; background: #fafafa; }
.lamp.red { background: #fb2a2f; border-color: #fb2a2f; }
.grip { margin: 4px 0 0 6px; }
</style>
